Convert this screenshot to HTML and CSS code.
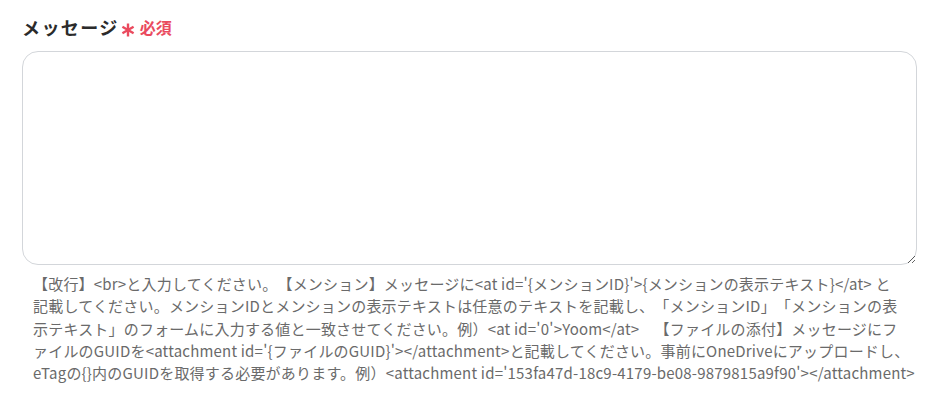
FILE: index.html
```html
<!DOCTYPE html>
<html lang="ja">
<head>
<meta charset="utf-8">
<link rel="stylesheet" href="styles.css">
</head>
<body>
<div class="field">
  <div class="label-row">
    <span class="label">メッセージ</span>
    <svg class="req-mark" width="14" height="14" viewBox="0 0 14 14" aria-hidden="true">
      <g stroke="#ea4a5e" stroke-width="2.4" stroke-linecap="butt">
        <line x1="7" y1="0.5" x2="7" y2="13.5"/>
        <line x1="1.4" y1="3.75" x2="12.6" y2="10.25"/>
        <line x1="1.4" y1="10.25" x2="12.6" y2="3.75"/>
      </g>
    </svg>
    <span class="req-text">必須</span>
  </div>
  <textarea class="input"></textarea>
  <p class="help"><span class="ln">【改行】&lt;br&gt;と入力してください。【メンション】メッセージに&lt;at id='{メンションID}'&gt;{メンションの表示テキスト}&lt;/at&gt; と</span><span class="ln">記載してください。メンションIDとメンションの表示テキストは任意のテキストを記載し、「メンションID」「メンションの表</span><span class="ln">示テキスト」のフォームに入力する値と一致させてください。例）&lt;at id='0'&gt;Yoom&lt;/at&gt;　【ファイルの添付】メッセージにフ</span><span class="ln">ァイルのGUIDを&lt;attachment id='{ファイルのGUID}'&gt;&lt;/attachment&gt;と記載してください。事前にOneDriveにアップロードし、</span><span class="ln">eTagの{}内のGUIDを取得する必要があります。例）&lt;attachment id='153fa47d-18c9-4179-be08-9879815a9f90'&gt;&lt;/attachment&gt;</span></p>
</div>
</body>
</html>
```
FILE: styles.css
```css
* { box-sizing: border-box; }
html, body { margin: 0; padding: 0; background: #fff; }
body {
  font-family: "Noto Sans CJK JP", "Noto Sans", sans-serif;
  color: #333;
}
.field {
  padding: 12px 29px 0 22px;
}
.label-row {
  display: flex;
  align-items: center;
  height: 30px;
}
.label {
  font-size: 18px;
  font-weight: 700;
  color: #2b2b2b;
  letter-spacing: 1.4px;
}
.req-mark {
  display: block;
  margin-left: 2px;
  margin-top: 5px;
}
.req-text {
  color: #ea4a5e;
  font-size: 16px;
  font-weight: 700;
  margin-left: 5px;
}
.input {
  display: block;
  width: 100%;
  height: 214px;
  margin-top: 9px;
  border: 1px solid #d3d6da;
  border-radius: 16px;
  resize: vertical;
  outline: none;
  background: #fff;
}
.help {
  margin: 8px 0 0 0;
  padding: 0 0 0 11px;
  font-size: 15px;
  line-height: 22.3px;
  letter-spacing: 0.2px;
  color: #6a6a6a;
  text-spacing-trim: space-all;
}
.ln {
  display: block;
  white-space: nowrap;
}
```
